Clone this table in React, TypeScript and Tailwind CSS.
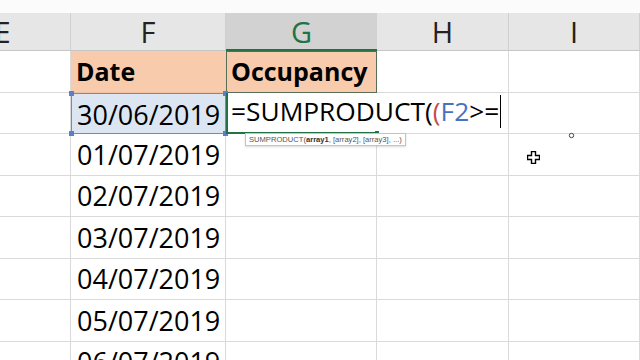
const font = { fontFamily: '"Open Sans", "Noto Sans", sans-serif' };

const dates = [
  '01/07/2019',
  '02/07/2019',
  '03/07/2019',
  '04/07/2019',
  '05/07/2019',
  '06/07/2019',
];

const rowHeights = ['h-[41px]', 'h-[42px]', 'h-[41px]', 'h-[42px]', 'h-[41px]', 'h-[42px]'];

function Handle({ pos }: { pos: string }) {
  return <span className={`absolute w-[5px] h-[5px] bg-[#5a7fc6] ${pos}`} />;
}

export default function App() {
  return (
    <div className="relative w-[640px] h-[360px] overflow-hidden bg-white" style={font}>
      <div className="h-[13px] bg-[#fbfbfb]" />

      <div className="-ml-[65px] w-[720px]">
        {/* column headers */}
        <div className="flex h-[38px] bg-[#e6e6e6] border-b border-[#c6c6c6] text-[29px] text-[#222] leading-none">
          <div className="w-[136px] shrink-0 flex items-center justify-center border-r border-[#d0d0d0]">E</div>
          <div className="w-[155px] shrink-0 flex items-center justify-center border-r border-[#d0d0d0]">F</div>
          <div className="w-[151px] shrink-0 flex items-center justify-center bg-[#d2d2d2] text-[#217346] border-b-2 border-[#217346] -mb-px">
            G
          </div>
          <div className="w-[132px] shrink-0 flex items-center justify-center border-r border-[#d0d0d0]">H</div>
          <div className="w-[131px] shrink-0 flex items-center justify-center border-r border-[#d0d0d0]">I</div>
          <div className="flex-1" />
        </div>

        {/* row 1: headings */}
        <div className="flex h-[42px] text-[25px] font-bold text-black leading-none">
          <div className="w-[136px] shrink-0 border-r border-b border-[#dadada]" />
          <div className="w-[155px] shrink-0 flex items-end pb-[8px] pl-[5px] bg-[#f8cbad] border-b border-[#f0c0a0]">Date</div>
          <div className="w-[151px] shrink-0 flex items-end pb-[8px] pl-[4px] bg-[#f8cbad] border border-[#566e58]">Occupancy</div>
          <div className="w-[132px] shrink-0 border-r border-b border-[#dadada]" />
          <div className="w-[131px] shrink-0 border-r border-b border-[#dadada]" />
          <div className="flex-1 border-b border-[#dadada]" />
        </div>

        {/* row 2: active formula */}
        <div className="flex h-[41px] text-[27px] text-black leading-none">
          <div className="w-[136px] shrink-0 border-r border-b border-[#dadada]" />
          <div className="relative w-[155px] shrink-0 flex items-end pb-[5px] pl-[5px] bg-[#dce6f3] border border-[#6a8bcb]">
            30/06/2019
            <Handle pos="-left-[3px] -top-[3px]" />
            <Handle pos="-right-[3px] -top-[3px]" />
            <Handle pos="-left-[3px] -bottom-[3px]" />
            <Handle pos="-right-[3px] -bottom-[3px]" />
          </div>
          <div className="relative z-10 w-[151px] shrink-0 border-l-2 border-b-2 border-[#217346]">
            <div className="absolute left-[3px] bottom-[4px] whitespace-nowrap text-[26.3px] leading-none">
              =SUMPRODUCT(<span className="text-[#c0504d]">(</span>
              <span className="text-[#4472c4]">F2</span>&gt;=
              <span className="inline-block align-[-7px] w-px h-[33px] bg-black ml-[1px]" />
            </div>
            <span className="absolute -right-[2px] -bottom-[3px] w-[4px] h-[4px] bg-[#217346]" />
            <div
              className="absolute left-[17px] top-[calc(100%+1px)] px-[3px] h-[13px] flex items-center bg-white border border-[#c4c4c4] text-[7.6px] text-[#555] font-normal whitespace-nowrap shadow-[0_1px_2px_rgba(0,0,0,0.15)]"
              style={{ fontFamily: '"Liberation Sans", sans-serif' }}
            >
              SUMPRODUCT(<b className="text-[#333]">array1</b>, [array2], [array3], ...)
            </div>
          </div>
          <div className="w-[132px] shrink-0 border-r border-b border-[#dadada]" />
          <div className="w-[131px] shrink-0 border-r border-b border-[#dadada]" />
          <div className="flex-1 border-b border-[#dadada]" />
        </div>

        {/* remaining dates */}
        {dates.map((d, i) => (
          <div key={d} className={`flex ${rowHeights[(i + 1) % rowHeights.length]} text-[27px] text-black leading-none`}>
            <div className="w-[136px] shrink-0 border-r border-b border-[#dadada]" />
            <div className="w-[155px] shrink-0 flex items-end pb-[7px] pl-[6px] border-r border-b border-[#dadada]">{d}</div>
            <div className="w-[151px] shrink-0 border-r border-b border-[#dadada]" />
            <div className="w-[132px] shrink-0 border-r border-b border-[#dadada]" />
            <div className="w-[131px] shrink-0 border-r border-b border-[#dadada]" />
            <div className="flex-1 border-b border-[#dadada]" />
          </div>
        ))}
      </div>

      {/* mouse pointer and hover dot */}
      <svg className="absolute left-[527px] top-[151px]" width="13" height="13" viewBox="0 0 13 13">
        <path d="M4.5 0.5h4v4h4v4h-4v4h-4v-4h-4v-4h4z" fill="white" stroke="black" strokeWidth="1.4" />
      </svg>
      <svg className="absolute left-[568px] top-[132px]" width="7" height="7" viewBox="0 0 7 7">
        <circle cx="3.5" cy="3.5" r="2.2" fill="white" stroke="#444" strokeWidth="1" />
      </svg>
    </div>
  );
}
